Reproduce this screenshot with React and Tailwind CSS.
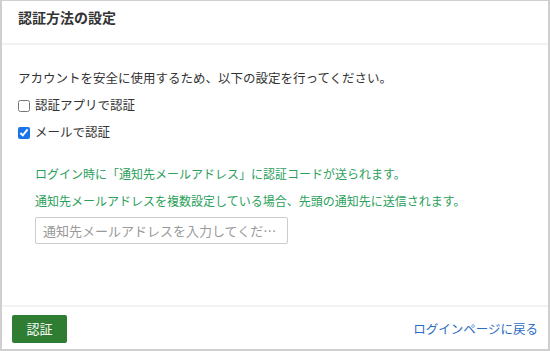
import { useState } from "react";

const font = { fontFamily: '"Noto Sans CJK JP", "Noto Sans", sans-serif' };

export default function App() {
  const [useApp, setUseApp] = useState(false);
  const [useMail, setUseMail] = useState(true);

  return (
    <div
      className="w-[550px] h-[351px] bg-white border-l-2 border-r-2 border-b-2 border-t border-[#cfcfcf] flex flex-col text-[#333]"
      style={font}
    >
      <div className="h-[44px] border-b-2 border-[#f2f2f2] px-4 pt-[7px]">
        <h1 className="text-[14px] leading-[18px] font-bold">認証方法の設定</h1>
      </div>

      <div className="flex-1 px-4 pt-[22px]">
        <p className="text-[12.5px] leading-[22px]">
          アカウントを安全に使用するため、以下の設定を行ってください。
        </p>
        <label className="flex items-center gap-[5px] text-[12.5px] h-[27px] mt-[3px]">
          <input
            type="checkbox"
            checked={useApp}
            onChange={(e) => setUseApp(e.target.checked)}
            className="w-[12px] h-[12px] m-0"
          />
          認証アプリで認証
        </label>
        <label className="flex items-center gap-[5px] text-[12.5px] h-[27px]">
          <input
            type="checkbox"
            checked={useMail}
            onChange={(e) => setUseMail(e.target.checked)}
            className="w-[12px] h-[12px] m-0 accent-[#1a73e8]"
          />
          メールで認証
        </label>

        {useMail && (
          <div className="pl-[17px] pt-[14px] text-[12px] text-[#2aa05a]">
            <p className="leading-[27px]">
              ログイン時に「通知先メールアドレス」に認証コードが送られます。
            </p>
            <p className="leading-[27px]">
              通知先メールアドレスを複数設定している場合、先頭の通知先に送信されます。
            </p>
            <input
              type="text"
              placeholder="通知先メールアドレスを入力してください"
              className="mt-[3px] w-[253px] h-[27px] border border-[#ccc] rounded-[2px] px-[7px] text-[13px] text-[#333] placeholder:text-[#999] outline-none text-ellipsis"
            />
          </div>
        )}
      </div>

      <div className="h-[44px] border-t-2 border-[#f2f2f2] flex items-center justify-between px-[10px] pt-[2px]">
        <button className="w-[55px] h-[28px] bg-[#2e7d32] text-white text-[13px] rounded-[2px]">
          認証
        </button>
        <a href="#" className="text-[12.5px] text-[#2b6cc4]">
          ログインページに戻る
        </a>
      </div>
    </div>
  );
}
